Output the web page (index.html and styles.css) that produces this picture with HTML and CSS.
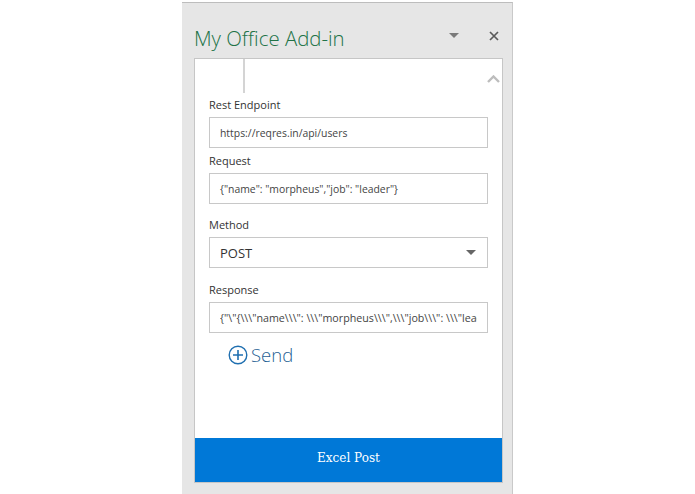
FILE: index.html
```html
<!DOCTYPE html>
<html lang="en">
<head>
  <meta charset="UTF-8">
  <title>My Office Add-in</title>
  <link rel="stylesheet" href="styles.css">
</head>
<body>
  <div class="pane">
    <header class="pane-head">
      <h1>My Office Add-in</h1>
      <span class="pane-menu"></span>
      <svg class="pane-close" width="10" height="10" viewBox="0 0 10 10"><path d="M1 1l8 8M9 1l-8 8" stroke="#5a5a5a" stroke-width="1.7" fill="none"/></svg>
    </header>
    <div class="card">
      <div class="card-top">
        <span class="tab-line"></span>
        <svg class="scroll-up" width="13" height="8" viewBox="0 0 13 8"><path d="M1 7l5.5-5.5L12 7" stroke="#bdbdbd" stroke-width="2.4" fill="none"/></svg>
      </div>
      <div class="form">
        <label class="lbl lbl-first">Rest Endpoint</label>
        <div class="field">https://reqres.in/api/users</div>
        <label class="lbl lbl-tight">Request</label>
        <div class="field">{"name": "morpheus","job": "leader"}</div>
        <label class="lbl">Method</label>
        <div class="field field-select">POST<span class="caret"></span></div>
        <label class="lbl lbl-wide">Response</label>
        <div class="field"><span class="clip">{"\"{\\\"name\\\": \\\"morpheus\\\",\\\"job\\\": \\\"leader\\\"}\""}</span></div>
        <div class="send">
          <svg width="20" height="20" viewBox="0 0 20 20"><circle cx="10" cy="10" r="8.8" stroke="#1f6fb0" stroke-width="1.4" fill="none"/><path d="M10 5v10M5 10h10" stroke="#1f6fb0" stroke-width="1.6"/></svg>
          <span>Send</span>
        </div>
      </div>
      <div class="excel-btn">Excel Post</div>
    </div>
  </div>
</body>
</html>
```

FILE: styles.css
```css
html, body {
  height: 100%;
}
body {
  margin: 0;
  background: #fff;
  font-family: "Open Sans", Arial, sans-serif;
  color: #333;
  overflow: hidden;
}
.pane {
  box-sizing: border-box;
  width: 331px;
  height: 494px;
  margin-left: 182px;
  margin-top: 2px;
  padding: 0 9px 0 12px;
  background: #e6e6e6;
  border-top: 1px solid #bdbdbd;
  border-right: 1px solid #c9c9c9;
}
.pane-head {
  display: flex;
  align-items: center;
  height: 55px;
}
.pane-head h1 {
  flex: 1;
  margin: 14px 0 0;
  font-size: 20.4px;
  font-weight: 300;
  color: #217346;
}
.pane-menu {
  width: 0;
  height: 0;
  margin: 10px 30px 0 0;
  border-left: 5px solid transparent;
  border-right: 5px solid transparent;
  border-top: 5px solid #7a7a7a;
}
.pane-close {
  margin: 10px 4px 0 0;
}
.card {
  display: flex;
  flex-direction: column;
  box-sizing: border-box;
  height: 425px;
  background: #fff;
  border: 1px solid #c6c6c6;
}
.card-top {
  display: flex;
  justify-content: space-between;
  height: 34px;
  padding-left: 48px;
  padding-right: 2px;
}
.tab-line {
  width: 2px;
  background: #d4d4d4;
}
.scroll-up {
  margin-top: 16px;
}
.form {
  flex: 1;
  padding: 0 14px;
}
.lbl {
  display: block;
  height: 21px;
  margin-top: 12px;
  font-size: 11px;
  line-height: 18px;
  color: #333;
}
.lbl-first {
  margin-top: 3px;
}
.lbl-tight {
  margin-top: 4px;
}
.lbl-wide {
  margin-top: 13px;
}
.field {
  display: flex;
  align-items: center;
  justify-content: space-between;
  box-sizing: border-box;
  height: 31px;
  padding: 0 10px;
  border: 1px solid #c8c8c8;
  font-size: 10.4px;
  color: #444;
}
.field-select {
  font-size: 13px;
  color: #333;
}
.caret {
  width: 0;
  height: 0;
  margin-right: 1px;
  border-left: 5px solid transparent;
  border-right: 5px solid transparent;
  border-top: 5px solid #666;
}
.clip {
  overflow: hidden;
  white-space: nowrap;
  font-size: 10.7px;
}
.send {
  display: flex;
  align-items: center;
  gap: 3px;
  margin: 9px 0 0 19px;
  font-size: 18.5px;
  font-weight: 300;
  color: #1f5f94;
}
.excel-btn {
  height: 44px;
  background: #0078d7;
  color: #fff;
  font-family: "DejaVu Serif", serif;
  font-size: 12px;
  line-height: 40px;
  text-align: center;
}
```
